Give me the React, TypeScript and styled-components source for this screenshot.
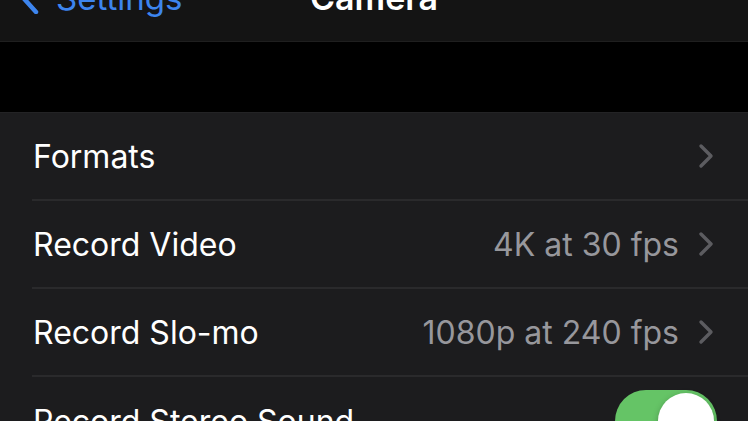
import styled, { createGlobalStyle } from "styled-components";

const GlobalStyle = createGlobalStyle`
  html, body {
    margin: 0;
    padding: 0;
    background: #000;
  }
  body {
    font-family: Inter, "Noto Sans", "Liberation Sans", sans-serif;
    -webkit-font-smoothing: antialiased;
  }
`;

const Screen = styled.div`
  width: 748px;
  height: 421px;
  overflow: hidden;
  background: #000;
  display: flex;
  flex-direction: column;
`;

const NavBar = styled.div`
  box-sizing: border-box;
  height: 42px;
  flex-shrink: 0;
  background: #141414;
  border-bottom: 1px solid #1f1f1f;
  display: grid;
  grid-template-columns: 1fr auto 1fr;
  align-items: start;
  overflow: hidden;
`;

const BackButton = styled.div`
  display: flex;
  align-items: center;
  gap: 16px;
  margin-top: -22px;
  padding-left: 14px;
  color: #3d85ee;
  font-size: 33px;
  line-height: 40px;
`;

const BackIcon = styled.svg`
  margin-top: -12px;
  flex-shrink: 0;
`;

const Title = styled.div`
  margin-top: -22px;
  color: #fff;
  font-size: 34px;
  font-weight: 600;
  line-height: 40px;
`;

const Gap = styled.div`
  height: 70px;
  flex-shrink: 0;
`;

const Group = styled.div`
  background: #1c1c1e;
  border-top: 1px solid #232325;
  flex: 1;
`;

const Row = styled.div`
  padding-left: 32px;
`;

const RowInner = styled.div<{ $last?: boolean }>`
  box-sizing: border-box;
  height: 88px;
  display: flex;
  align-items: center;
  padding-right: 31px;
  border-bottom: ${(p) => (p.$last ? "none" : "2px solid #2a2a2c")};
`;

const Label = styled.div`
  flex: 1;
  padding-left: 1px;
  color: #fff;
  font-size: 32px;
`;

const Value = styled.div`
  color: #97979c;
  font-size: 32px;
  margin-right: 18px;
`;

const Toggle = styled.div<{ $on: boolean }>`
  box-sizing: border-box;
  width: 102px;
  height: 62px;
  border-radius: 31px;
  padding: 3px;
  display: flex;
  justify-content: ${(p) => (p.$on ? "flex-end" : "flex-start")};
  background: ${(p) => (p.$on ? "#65c466" : "#39393d")};
`;

const Knob = styled.div`
  width: 56px;
  height: 56px;
  border-radius: 50%;
  background: #fff;
  box-shadow: 0 2px 6px rgba(0, 0, 0, 0.25);
`;

const Chevron = () => (
  <svg width="20" height="26" viewBox="0 0 20 26">
    <path
      d="M4 3 L14 13 L4 23"
      fill="none"
      stroke="#5c5c60"
      strokeWidth="3.4"
      strokeLinecap="round"
      strokeLinejoin="round"
    />
  </svg>
);

const BackChevron = () => (
  <BackIcon width="26" height="44" viewBox="0 0 26 44">
    <path
      d="M22 2 L4 22 L22 42"
      fill="none"
      stroke="#3d85ee"
      strokeWidth="4.5"
      strokeLinecap="round"
      strokeLinejoin="round"
    />
  </BackIcon>
);

const rows = [
  { label: "Formats" },
  { label: "Record Video", value: "4K at 30 fps" },
  { label: "Record Slo-mo", value: "1080p at 240 fps" },
  { label: "Record Stereo Sound", toggle: true },
];

export default function App() {
  return (
    <>
      <GlobalStyle />
      <Screen>
        <NavBar>
          <BackButton>
            <BackChevron />
            <span>Settings</span>
          </BackButton>
          <Title>Camera</Title>
          <div />
        </NavBar>
        <Gap />
        <Group>
          {rows.map((r, i) => (
            <Row key={r.label}>
              <RowInner $last={i === rows.length - 1}>
                <Label>{r.label}</Label>
                {r.value && <Value>{r.value}</Value>}
                {r.toggle ? (
                  <Toggle $on>
                    <Knob />
                  </Toggle>
                ) : (
                  <Chevron />
                )}
              </RowInner>
            </Row>
          ))}
        </Group>
      </Screen>
    </>
  );
}
